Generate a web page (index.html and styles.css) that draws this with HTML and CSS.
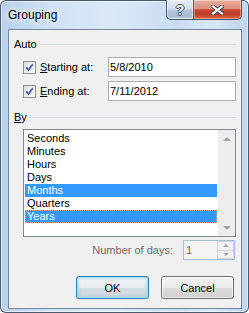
FILE: index.html
```html
<!DOCTYPE html>
<html lang="en">
<head>
    <meta charset="UTF-8">
    <title>Grouping</title>
    <link rel="stylesheet" href="styles.css">
</head>
<body>
    <div class="window">
        <div class="titlebar">
            <span class="title">Grouping</span>
            <div class="caption-buttons">
                <div class="cap-btn help"><span>?</span></div>
                <div class="cap-btn close">
                    <svg width="13" height="10" viewBox="0 0 13 10">
                        <path d="M2 1.5 L11 8.5 M11 1.5 L2 8.5" stroke="#3a4656" stroke-width="4.2" stroke-linecap="square" fill="none"/>
                        <path d="M2 1.5 L11 8.5 M11 1.5 L2 8.5" stroke="#ffffff" stroke-width="2.2" stroke-linecap="square" fill="none"/>
                    </svg>
                </div>
            </div>
        </div>

        <div class="client">
            <div class="group-head">
                <span>Auto</span>
                <div class="rule"></div>
            </div>

            <div class="field-row first">
                <span class="check">
                    <svg width="11" height="11" viewBox="0 0 11 11">
                        <path d="M2.2 5.4 L4.4 8 L8.8 2.2" stroke="#4a5f97" stroke-width="1.8" fill="none"/>
                    </svg>
                </span>
                <span class="field-label"><u>S</u>tarting at:</span>
                <div class="textbox">5/8/2010</div>
            </div>

            <div class="field-row">
                <span class="check">
                    <svg width="11" height="11" viewBox="0 0 11 11">
                        <path d="M2.2 5.4 L4.4 8 L8.8 2.2" stroke="#4a5f97" stroke-width="1.8" fill="none"/>
                    </svg>
                </span>
                <span class="field-label"><u>E</u>nding at:</span>
                <div class="textbox">7/11/2012</div>
            </div>

            <div class="group-head by">
                <span><u>B</u>y</span>
                <div class="rule"></div>
            </div>

            <div class="listbox">
                <ul class="items">
                    <li>Seconds</li>
                    <li>Minutes</li>
                    <li>Hours</li>
                    <li>Days</li>
                    <li class="selected">Months</li>
                    <li>Quarters</li>
                    <li class="selected focused">Years</li>
                </ul>
                <div class="scrollbar">
                    <span class="arrow up"></span>
                    <span class="arrow down"></span>
                </div>
            </div>

            <div class="days-row">
                <span class="days-label">Number of days:</span>
                <div class="spin">
                    <span class="spin-value">1</span>
                    <div class="spin-btns">
                        <span class="spin-btn"><i class="tri up"></i></span>
                        <span class="spin-btn"><i class="tri down"></i></span>
                    </div>
                </div>
            </div>

            <div class="button-row">
                <button class="btn default">OK</button>
                <button class="btn">Cancel</button>
            </div>
        </div>
    </div>
</body>
</html>
```

FILE: styles.css
```css
* {
    margin: 0;
    padding: 0;
    box-sizing: border-box;
}

html, body {
    width: 249px;
    height: 313px;
    overflow: hidden;
    background: #ffffff;
}

body {
    font-family: "Liberation Sans", Arial, sans-serif;
    font-size: 11px;
    color: #000;
}

/* window frame */
.window {
    width: 249px;
    height: 313px;
    display: flex;
    flex-direction: column;
    border-radius: 6px;
    background: linear-gradient(to right, #b7d1ee 0%, #cfe1f4 20%, #dbe9f7 45%, #c9ddf2 70%, #d7e7f6 85%, #bdd5ef 100%);
    box-shadow: inset 0 0 0 1px #4a5b70, inset 0 0 0 2px rgba(255, 255, 255, 0.55);
}

.titlebar {
    height: 29px;
    display: flex;
    align-items: flex-start;
}

.title {
    padding: 8px 0 0 8px;
    font-size: 12px;
    line-height: 15px;
    text-shadow: 0 0 6px #ffffff, 0 0 10px #ffffff;
}

.caption-buttons {
    display: flex;
    margin-left: auto;
    margin-right: 7px;
}

.cap-btn {
    height: 20px;
    display: flex;
    align-items: center;
    justify-content: center;
    border: 1px solid #4b5c70;
    border-top: none;
}

.help {
    width: 27px;
    border-right: none;
    border-bottom-left-radius: 5px;
    background: linear-gradient(#e4ecf5 0%, #d3deea 48%, #b5c6d8 52%, #a9bcd1 85%, #bccbdb 100%);
    box-shadow: inset 0 0 0 1px rgba(255, 255, 255, 0.5);
}

.help span {
    font-size: 14px;
    font-weight: bold;
    color: #ffffff;
    line-height: 14px;
    text-shadow: 1px 0 0 #3a4656, -1px 0 0 #3a4656, 0 1px 0 #3a4656, 0 -1px 0 #3a4656;
}

.close {
    width: 49px;
    border-bottom-right-radius: 5px;
    background: linear-gradient(#eab0a2 0%, #df8d7b 46%, #c8452e 52%, #c23c25 75%, #d86a4d 100%);
    box-shadow: inset 0 0 0 1px rgba(255, 255, 255, 0.35);
}

/* client area */
.client {
    flex: 1;
    margin: 0 7px 4px 8px;
    border: 1px solid #7a8796;
    background: #f0f0f0;
    padding: 0 5px;
    display: flex;
    flex-direction: column;
}

.group-head {
    margin-top: 7px;
    height: 15px;
    line-height: 15px;
    display: flex;
    align-items: center;
}

.group-head.by {
    margin-top: 9px;
}

.rule {
    flex: 1;
    height: 1px;
    margin-left: 3px;
    background: #d5dfe5;
}

.field-row {
    height: 20px;
    margin-top: 4px;
    margin-left: 9px;
    display: flex;
    align-items: center;
}

.field-row.first {
    margin-top: 5px;
}

.check {
    width: 13px;
    height: 13px;
    border: 1px solid #8e8f8f;
    background: linear-gradient(135deg, #d8dde3 0%, #f2f4f6 70%, #ffffff 100%);
    display: flex;
}

.field-label {
    margin-left: 4px;
}

.textbox {
    margin-left: auto;
    width: 128px;
    height: 20px;
    border: 1px solid #abadb3;
    background: #ffffff;
    padding-left: 1px;
    line-height: 18px;
}

/* list */
.listbox {
    margin-top: 4px;
    margin-left: 9px;
    height: 108px;
    border: 1px solid #828790;
    background: #ffffff;
    display: flex;
}

.items {
    flex: 1;
    list-style: none;
    padding: 2px 1px;
}

.items li {
    height: 13px;
    line-height: 13px;
    padding-left: 2px;
}

.items li.selected {
    background: #3399ff;
    color: #ffffff;
}

.items li.focused {
    outline: 1px dotted #e0a27a;
    outline-offset: -1px;
}

.scrollbar {
    width: 17px;
    background: #ededed;
    display: flex;
    flex-direction: column;
    justify-content: space-between;
    align-items: center;
    padding: 7px 0 6px;
}

.arrow {
    width: 0;
    height: 0;
    border-left: 4px solid transparent;
    border-right: 4px solid transparent;
}

.arrow.up {
    border-bottom: 4px solid #a3a3a3;
}

.arrow.down {
    border-top: 4px solid #a3a3a3;
}

/* number of days */
.days-row {
    margin-top: 3px;
    height: 20px;
    display: flex;
    justify-content: flex-end;
    align-items: center;
}

.days-label {
    color: #6d6d6d;
    margin-right: 10px;
}

.spin {
    width: 52px;
    height: 20px;
    margin-right: 1px;
    border: 1px solid #a8bed8;
    background: #f4f4f4;
    display: flex;
}

.spin-value {
    flex: 1;
    padding-left: 2px;
    line-height: 18px;
    color: #6d6d6d;
}

.spin-btns {
    width: 17px;
    display: flex;
    flex-direction: column;
}

.spin-btn {
    flex: 1;
    border: 1px solid #d3d6da;
    background: #f2f2f2;
    display: flex;
    align-items: center;
    justify-content: center;
}

.spin-btn + .spin-btn {
    border-top: none;
}

.tri {
    width: 0;
    height: 0;
    border-left: 3px solid transparent;
    border-right: 3px solid transparent;
}

.tri.up {
    border-bottom: 3px solid #a8a8a8;
}

.tri.down {
    border-top: 3px solid #a8a8a8;
}

/* buttons */
.button-row {
    margin-top: 16px;
    margin-right: 2px;
    display: flex;
    justify-content: flex-end;
    gap: 12px;
}

.btn {
    width: 73px;
    height: 23px;
    font-family: inherit;
    font-size: 11px;
    color: #000;
    border: 1px solid #707070;
    border-radius: 3px;
    background: linear-gradient(#f2f2f2 0%, #ebebeb 50%, #dddddd 51%, #cfcfcf 100%);
    box-shadow: inset 0 0 0 1px rgba(255, 255, 255, 0.7);
}

.btn.default {
    border-color: #3c7fb1;
    background: linear-gradient(#eef3f6 0%, #e6ecef 50%, #d6dfe4 51%, #cbd6dc 100%);
    box-shadow: inset 0 0 0 1px #9fdcf6, inset 0 0 3px 1px rgba(110, 200, 240, 0.5);
}
```
